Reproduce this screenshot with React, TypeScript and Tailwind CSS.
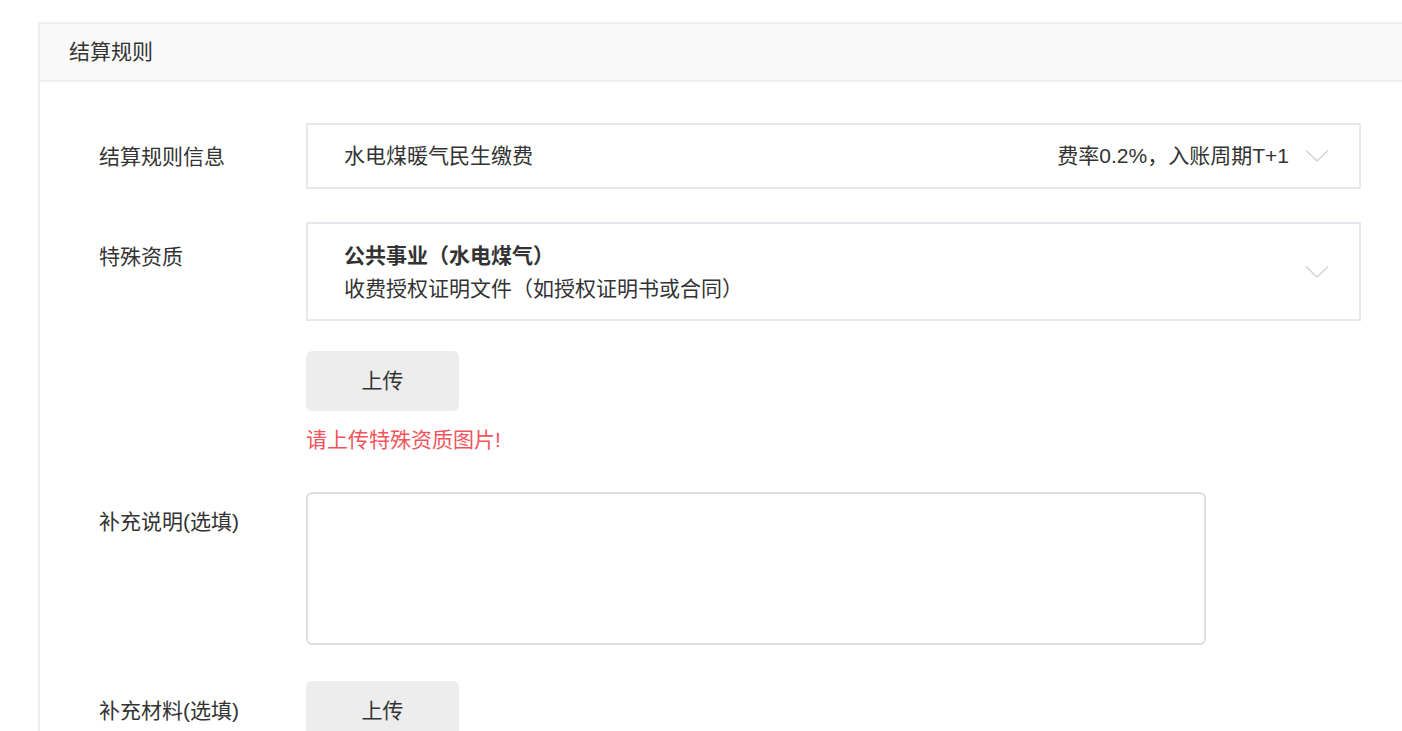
import { useState } from 'react'

const font = { fontFamily: '"Liberation Sans", "Noto Sans CJK SC", sans-serif' }

function Chevron() {
  return (
    <svg width="24" height="14" viewBox="0 0 24 14" fill="none" className="shrink-0">
      <path d="M1 1.5 L12 12 L23 1.5" stroke="#d4d4d4" strokeWidth="1.6" />
    </svg>
  )
}

function UploadButton() {
  return (
    <button
      type="button"
      className="h-[60px] w-[153px] rounded-[6px] bg-[#ededed] text-[21px] text-[#333]"
    >
      上传
    </button>
  )
}

export default function App() {
  const [note, setNote] = useState('')

  return (
    <div className="min-h-screen bg-white pl-[38px] pt-[22px] text-[#333]" style={font}>
      <div className="border-l-2 border-t-2 border-[#eeeeee]">
        <div className="flex h-[58px] items-center border-b-2 border-[#eeeeee] bg-[#f9f9f9] pl-[29px] text-[21px]">
          结算规则
        </div>

        <div className="pt-[41px] pb-10">
          {/* 结算规则信息 */}
          <div className="flex items-center">
            <div className="w-[266px] shrink-0 pl-[59px] pt-[2px] text-[21px] leading-[30px]">结算规则信息</div>
            <div className="flex h-[66px] w-[1055px] items-center justify-between border-2 border-[#e6e8ee] pl-[36px] pr-[30px] text-[21px] leading-[30px]">
              <span>水电煤暖气民生缴费</span>
              <div className="flex items-center gap-[16px]">
                <span>费率0.2%，入账周期T+1</span>
                <Chevron />
              </div>
            </div>
          </div>

          {/* 特殊资质 */}
          <div className="mt-[33px] flex">
            <div className="w-[266px] shrink-0 pl-[59px] pt-[20px] text-[21px] leading-[30px]">特殊资质</div>
            <div className="flex-1">
              <div className="flex h-[99px] w-[1055px] items-center justify-between border-2 border-[#e6e8ee] pl-[36px] pr-[30px]">
                <div className="flex flex-col text-[21px] leading-[33px]">
                  <span className="font-bold">公共事业（水电煤气）</span>
                  <span>收费授权证明文件（如授权证明书或合同）</span>
                </div>
                <Chevron />
              </div>
              <div className="mt-[30px]">
                <UploadButton />
              </div>
              <div className="mt-[14px] text-[21px] leading-[30px] text-[#f2545b]">请上传特殊资质图片!</div>
            </div>
          </div>

          {/* 补充说明 */}
          <div className="mt-[37px] flex">
            <div className="w-[266px] shrink-0 pl-[59px] pt-[15px] text-[21px] leading-[30px]">补充说明(选填)</div>
            <textarea
              value={note}
              onChange={(e) => setNote(e.target.value)}
              className="h-[153px] w-[900px] resize-none rounded-[6px] border-2 border-[#dedede] p-3 text-[21px] outline-none"
            />
          </div>

          {/* 补充材料 */}
          <div className="mt-[36px] flex items-center">
            <div className="w-[266px] shrink-0 pl-[59px] text-[21px] leading-[30px]">补充材料(选填)</div>
            <UploadButton />
          </div>
        </div>
      </div>
    </div>
  )
}
